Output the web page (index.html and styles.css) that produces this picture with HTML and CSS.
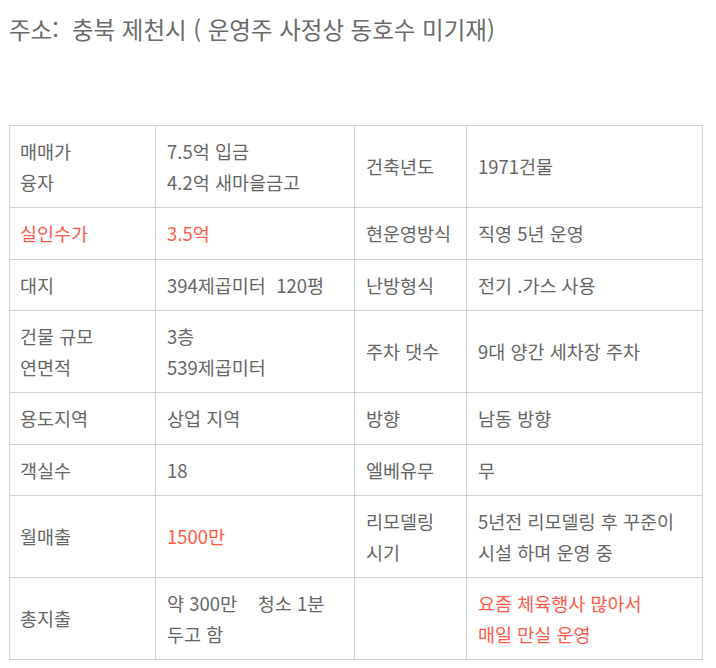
FILE: index.html
```html
<!DOCTYPE html>
<html lang="ko">
<head>
<meta charset="utf-8">
<link rel="stylesheet" href="styles.css">
</head>
<body>
<div class="page">
  <p class="addr">주소:&nbsp; 충북 제천시 ( 운영주 사정상 동호수 미기재)</p>
  <table class="info">
    <colgroup>
      <col class="c1"><col class="c2"><col class="c3"><col class="c4">
    </colgroup>
    <tr>
      <td>매매가<br>융자</td>
      <td>7.5억 입금<br>4.2억 새마을금고</td>
      <td>건축년도</td>
      <td>1971건물</td>
    </tr>
    <tr>
      <td class="red">실인수가</td>
      <td class="red">3.5억</td>
      <td>현운영방식</td>
      <td>직영 5년 운영</td>
    </tr>
    <tr>
      <td>대지</td>
      <td>394제곱미터&nbsp; 120평</td>
      <td>난방형식</td>
      <td>전기 .가스 사용</td>
    </tr>
    <tr>
      <td>건물 규모<br>연면적</td>
      <td>3층<br>539제곱미터</td>
      <td>주차 댓수</td>
      <td>9대 양간 세차장 주차</td>
    </tr>
    <tr>
      <td>용도지역</td>
      <td>상업 지역</td>
      <td>방향</td>
      <td>남동 방향</td>
    </tr>
    <tr>
      <td>객실수</td>
      <td>18</td>
      <td>엘베유무</td>
      <td>무</td>
    </tr>
    <tr>
      <td>월매출</td>
      <td class="red">1500만</td>
      <td>리모델링<br>시기</td>
      <td>5년전 리모델링 후 꾸준이<br>시설 하며 운영 중</td>
    </tr>
    <tr>
      <td>총지출</td>
      <td>약 300만&nbsp;&nbsp;&nbsp; 청소 1분<br>두고 함</td>
      <td></td>
      <td class="red">요즘 체육행사 많아서<br>매일 만실 운영</td>
    </tr>
  </table>
</div>
</body>
</html>
```

FILE: styles.css
```css
html, body {
  margin: 0;
  padding: 0;
  background: #fff;
}

.page {
  padding: 0 0 0 9px;
  font-family: "Noto Sans CJK KR", "Noto Sans", sans-serif;
  color: #666;
}

.addr {
  margin: 0;
  padding-top: 13px;
  height: 112px;
  font-size: 23.5px;
  line-height: 32px;
  color: #6a6a6a;
}

.info {
  border-collapse: collapse;
  width: 693px;
  table-layout: fixed;
  font-size: 18.5px;
  line-height: 30.5px;
}

.c1 { width: 146px; }
.c2 { width: 199px; }
.c3 { width: 112px; }
.c4 { width: 236px; }

.info td {
  border: 1px solid #d3d3d3;
  padding: 10px 6px 10px 11px;
  vertical-align: middle;
  white-space: nowrap;
}

.info td:first-child {
  padding-left: 10px;
}

.info .red {
  color: #ff5a4a;
}
```
